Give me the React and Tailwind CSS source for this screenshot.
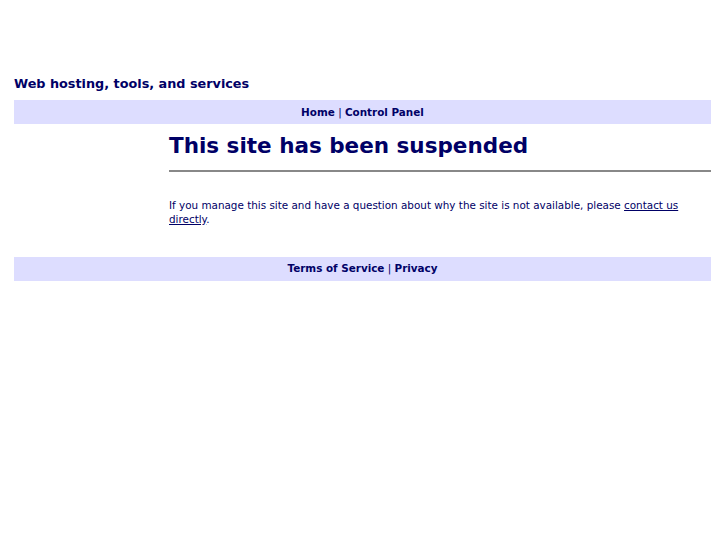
import React from 'react';

const font = { fontFamily: '"DejaVu Sans", Verdana, sans-serif' };

export default function App() {
  return (
    <div className="min-h-[545px] bg-white pl-[14px] pr-[16px] text-[#000066]" style={font}>
      <div className="h-[76px]" />
      <h2 className="text-[12.8px] font-bold leading-[16px]">Web hosting, tools, and services</h2>
      <div className="mt-[8px] flex h-[24px] items-center justify-center whitespace-pre bg-[#ddddff] pt-[1px] text-[10.4px] font-bold">
        <a href="#">Home</a>
        <span className="font-normal"> | </span>
        <a href="#">Control Panel</a>
      </div>

      <div className="flex">
        <div className="w-[155px] shrink-0" />
        <div className="flex-1">
          <h1 className="mt-[8px] text-[21.5px] font-bold leading-[28px]">This site has been suspended</h1>
          <hr className="mt-[10px] border-0 border-t-2 border-[#888888]" />
          <p className="mt-[26px] text-[10.4px] leading-[14px]">
            If you manage this site and have a question about why the site is not available, please{' '}
            <a href="#" className="underline">contact us directly</a>.
          </p>
        </div>
      </div>

      <div className="mt-[31px] flex h-[24px] items-center justify-center whitespace-pre bg-[#ddddff] text-[10.4px] font-bold">
        <a href="#">Terms of Service</a>
        <span className="font-normal"> | </span>
        <a href="#">Privacy</a>
      </div>
    </div>
  );
}
